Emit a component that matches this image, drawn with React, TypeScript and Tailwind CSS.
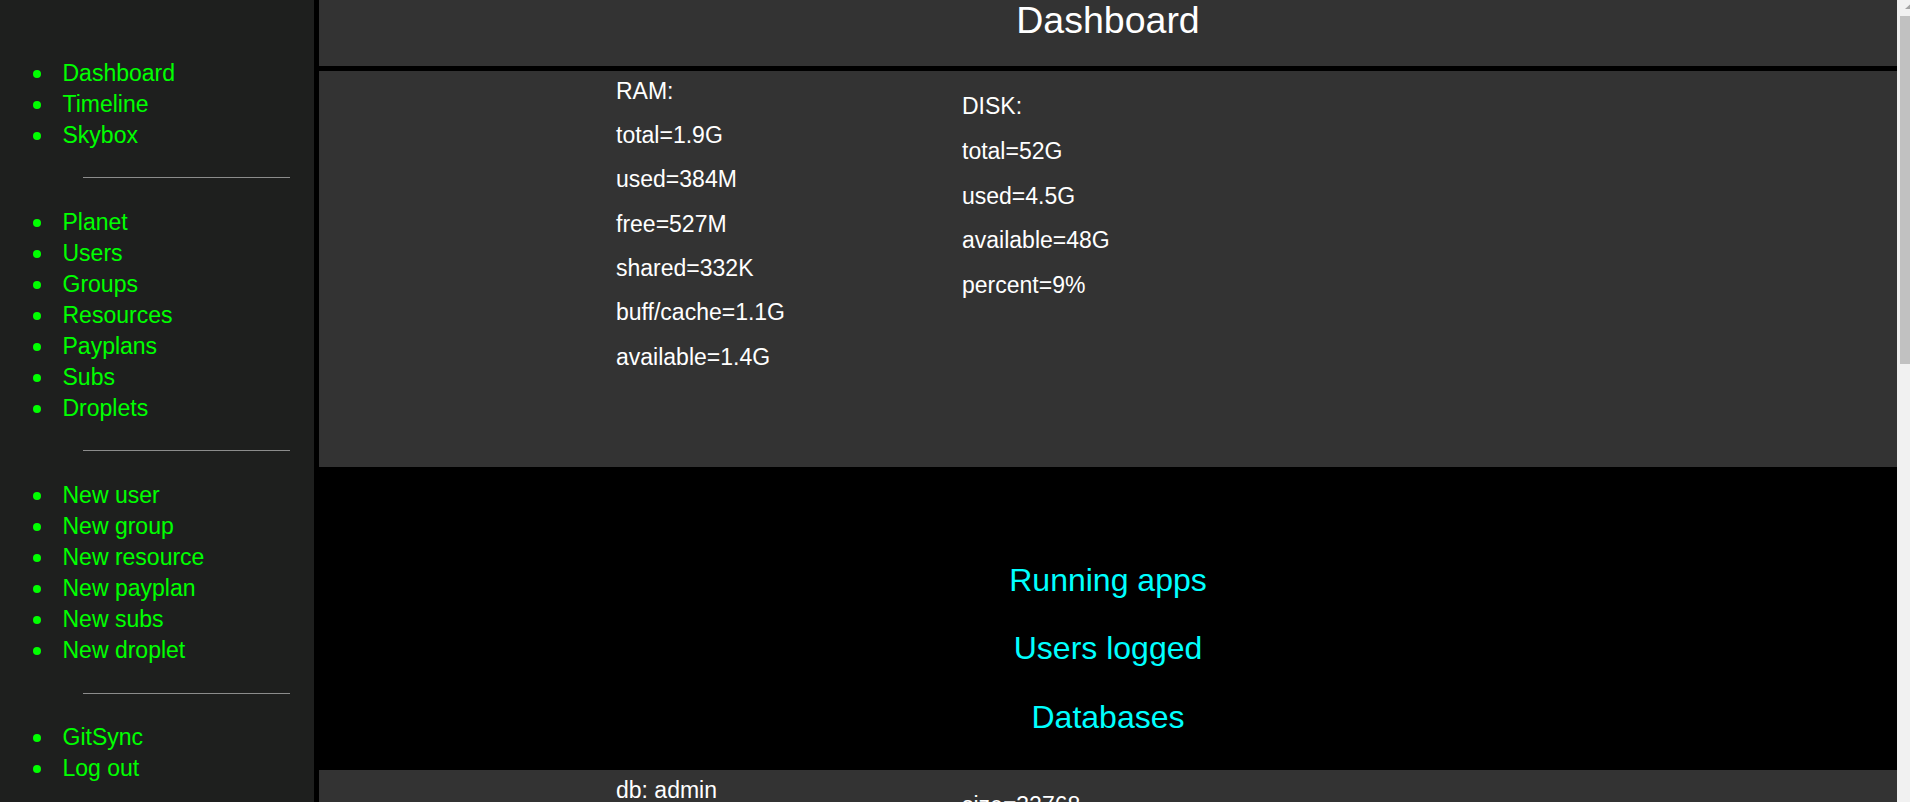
import React from 'react';

const navGroups = [
  ['Dashboard', 'Timeline', 'Skybox'],
  ['Planet', 'Users', 'Groups', 'Resources', 'Payplans', 'Subs', 'Droplets'],
  ['New user', 'New group', 'New resource', 'New payplan', 'New subs', 'New droplet'],
  ['GitSync', 'Log out'],
];

const ram = ['RAM:', 'total=1.9G', 'used=384M', 'free=527M', 'shared=332K', 'buff/cache=1.1G', 'available=1.4G'];
const disk = ['DISK:', 'total=52G', 'used=4.5G', 'available=48G', 'percent=9%'];

const font = "font-['Liberation_Sans',Arial,sans-serif]";

function Sidebar() {
  return (
    <aside className="w-[319px] shrink-0 h-full bg-[#1e1f1e] border-r-[5px] border-black pt-[58px]">
      {navGroups.map((group, i) => (
        <div key={i}>
          <ul>
            {group.map((item) => (
              <li key={item} className="flex items-center h-[31px] leading-[31px] text-[23px] text-[#00ff00]">
                <span className="ml-[33px] mr-[21.5px] w-[8px] h-[8px] rounded-full bg-[#00ff00]" />
                <a href="#" className="text-[#00ff00]">{item}</a>
              </li>
            ))}
          </ul>
          {i < navGroups.length - 1 && (
            <div className="mt-[26.4px] mb-[28.7px] ml-[83px] w-[207px] h-px bg-[#8c8c8c]" />
          )}
        </div>
      ))}
    </aside>
  );
}

function Stats({ left, right }: { left: string[]; right: string[] }) {
  return (
    <div className="flex pl-[297px] text-white text-[23px] leading-[26px]">
      <div className="w-[346px] pt-[6.8px] flex flex-col gap-[18.3px]">
        {left.map((l) => (
          <div key={l}>{l}</div>
        ))}
      </div>
      <div className="pt-[22.4px] flex flex-col gap-[18.6px]">
        {right.map((l) => (
          <div key={l}>{l}</div>
        ))}
      </div>
    </div>
  );
}

function Scrollbar() {
  return (
    <div className="w-[13px] shrink-0 h-full bg-[#f1f1f1] flex flex-col">
      <svg width="13" height="16" viewBox="0 0 13 16" className="shrink-0">
        <polygon points="8,9 13,4.5 13,9" fill="#a3a3a3" />
      </svg>
      <div className="ml-[3px] h-[348px] bg-[#c1c1c1]" />
    </div>
  );
}

export default function App() {
  return (
    <div className={`flex h-screen w-full overflow-hidden bg-black ${font}`}>
      <Sidebar />

      <main className="flex-1 min-w-0 h-full overflow-hidden flex flex-col bg-black">
        {/* Header */}
        <header className="h-[71px] shrink-0 bg-[#333333] border-b-[5px] border-black">
          <h1 className="text-center text-white text-[37.5px] leading-[41px] font-normal">Dashboard</h1>
        </header>

        {/* RAM / DISK */}
        <section className="h-[396px] shrink-0 bg-[#333333]">
          <Stats left={ram} right={disk} />
        </section>

        {/* Links */}
        <section className="h-[303px] shrink-0 bg-black flex flex-col items-center pt-[95px] gap-[31.3px] text-[32px] leading-[37px] text-[#00ffff]">
          <a href="#">Running apps</a>
          <a href="#">Users logged</a>
          <a href="#">Databases</a>
        </section>

        {/* Databases */}
        <section className="shrink-0 bg-[#333333] pb-[60px]">
          <Stats left={['db: admin', 'collections=1', 'objects=2']} right={['size=32768', 'storage=20480', 'indexes=2']} />
        </section>
      </main>

      <Scrollbar />
    </div>
  );
}
